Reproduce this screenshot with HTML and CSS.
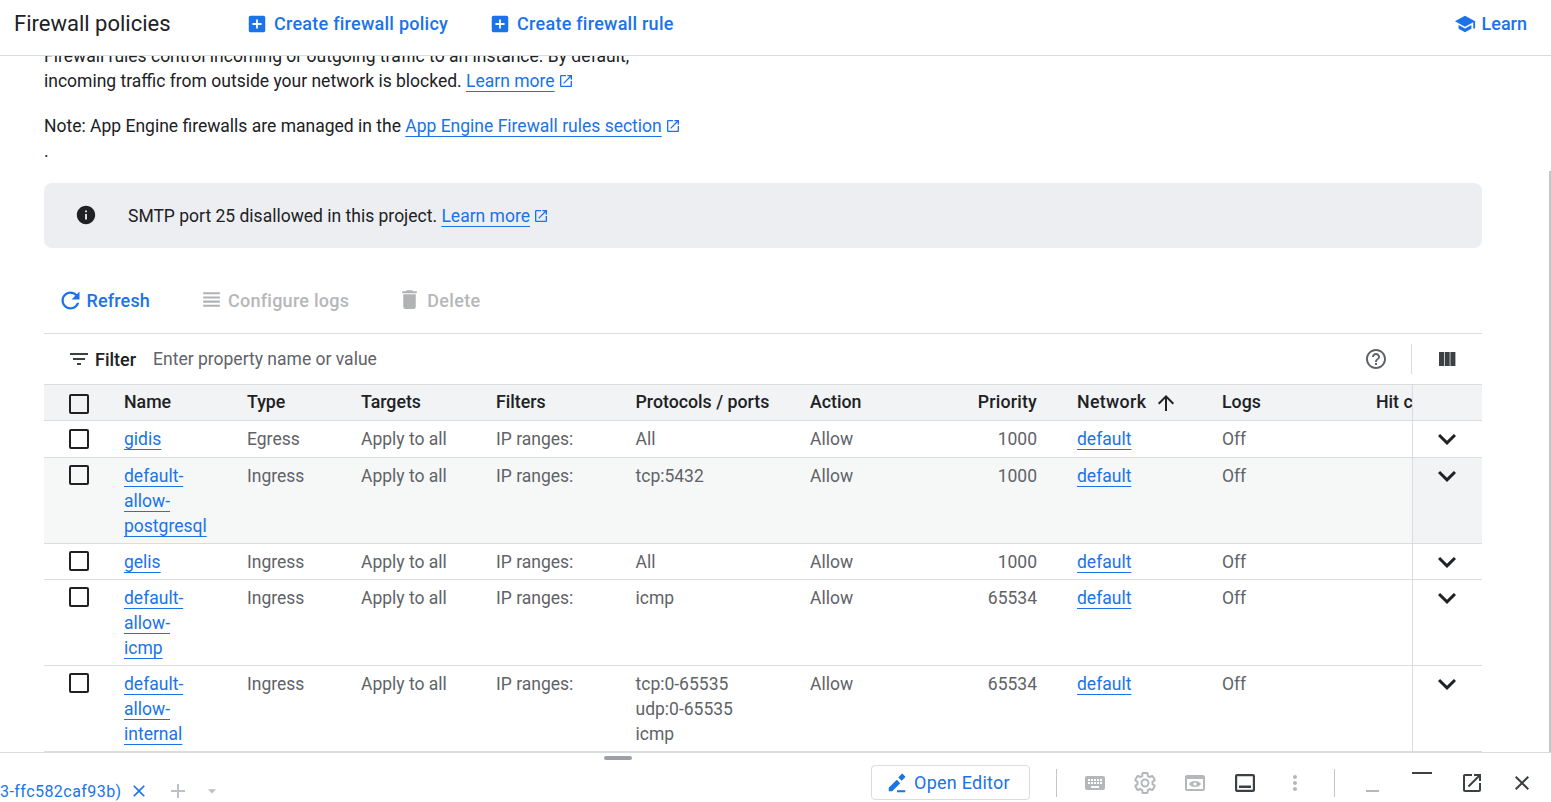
FILE: index.html
```html
<!DOCTYPE html>
<html lang="en">
<head>
    <meta charset="UTF-8">
    <title>Firewall policies</title>
    <link rel="stylesheet" href="styles.css">
</head>
<body>
    <header class="topbar">
        <h1 class="topbar-title">Firewall policies</h1>
        <a class="topbar-action first" href="#">
            <svg class="icon-22" viewBox="0 0 24 24"><path d="M19 3H5c-1.11 0-2 .9-2 2v14c0 1.1.89 2 2 2h14c1.1 0 2-.9 2-2V5c0-1.1-.9-2-2-2zm-2 10h-4v4h-2v-4H7v-2h4V7h2v4h4v2z"/></svg>
            Create firewall policy
        </a>
        <a class="topbar-action" href="#">
            <svg class="icon-22" viewBox="0 0 24 24"><path d="M19 3H5c-1.11 0-2 .9-2 2v14c0 1.1.89 2 2 2h14c1.1 0 2-.9 2-2V5c0-1.1-.9-2-2-2zm-2 10h-4v4h-2v-4H7v-2h4V7h2v4h4v2z"/></svg>
            Create firewall rule
        </a>
        <a class="topbar-learn" href="#">
            <svg class="icon-22" viewBox="0 0 24 24"><path d="M5 13.18v4L12 21l7-3.82v-4L12 17l-7-3.82zM12 3L1 9l11 6 9-4.91V17h2V9L12 3z"/></svg>
            Learn
        </a>
    </header>

    <main class="content">
        <div class="scroller">
            <p class="intro">Firewall rules control incoming or outgoing traffic to an instance. By default,<br>incoming traffic from outside your network is blocked. <a class="link" href="#">Learn more</a><svg class="ext" viewBox="0 0 24 24"><path d="M19 19H5V5h7V3H5c-1.11 0-2 .9-2 2v14c0 1.1.89 2 2 2h14c1.1 0 2-.9 2-2v-7h-2v7zM14 3v2h3.59l-9.83 9.83 1.41 1.41L19 6.41V10h2V3h-7z"/></svg></p>
            <p class="intro note">Note: App Engine firewalls are managed in the <a class="link" href="#">App Engine Firewall rules section</a><svg class="ext" viewBox="0 0 24 24"><path d="M19 19H5V5h7V3H5c-1.11 0-2 .9-2 2v14c0 1.1.89 2 2 2h14c1.1 0 2-.9 2-2v-7h-2v7zM14 3v2h3.59l-9.83 9.83 1.41 1.41L19 6.41V10h2V3h-7z"/></svg><br>.</p>

            <div class="banner">
                <svg class="banner-icon" viewBox="0 0 24 24"><path d="M12 2C6.48 2 2 6.48 2 12s4.48 10 10 10 10-4.48 10-10S17.52 2 12 2zm1 15h-2v-6h2v6zm0-8h-2V7h2v2z"/></svg>
                <span class="banner-text">SMTP port 25 disallowed in this project. <a class="link" href="#">Learn more</a><svg class="ext" viewBox="0 0 24 24"><path d="M19 19H5V5h7V3H5c-1.11 0-2 .9-2 2v14c0 1.1.89 2 2 2h14c1.1 0 2-.9 2-2v-7h-2v7zM14 3v2h3.59l-9.83 9.83 1.41 1.41L19 6.41V10h2V3h-7z"/></svg></span>
            </div>

            <div class="toolbar">
                <a class="tool tool-refresh" href="#">
                    <svg viewBox="0 0 24 24"><path d="M17.65 6.35C16.2 4.9 14.21 4 12 4c-4.42 0-7.99 3.58-7.99 8s3.57 8 7.99 8c3.73 0 6.84-2.55 7.73-6h-2.08c-.82 2.33-3.04 4-5.65 4-3.31 0-6-2.69-6-6s2.69-6 6-6c1.66 0 3.14.69 4.22 1.78L13 11h7V4l-2.35 2.35z"/></svg>
                    Refresh
                </a>
                <span class="tool tool-logs">
                    <svg viewBox="0 0 24 24"><path d="M4 15h16v-2H4v2zm0 4h16v-2H4v2zm0-8h16V9H4v2zm0-6v2h16V5H4z"/></svg>
                    Configure logs
                </span>
                <span class="tool tool-delete">
                    <svg viewBox="0 0 24 24"><path d="M6 19c0 1.1.9 2 2 2h8c1.1 0 2-.9 2-2V7H6v12zM19 4h-3.5l-1-1h-5l-1 1H5v2h14V4z"/></svg>
                    Delete
                </span>
            </div>

            <div class="filterbar">
                <svg class="icon-24 filter-icon" viewBox="0 0 24 24"><path d="M10 18h4v-2h-4v2zM3 6v2h18V6H3zm3 7h12v-2H6v2z"/></svg>
                <span class="filter-label">Filter</span>
                <span class="filter-hint">Enter property name or value</span>
                <svg class="icon-24 help-icon" viewBox="0 0 24 24"><path d="M11 18h2v-2h-2v2zm1-16C6.48 2 2 6.48 2 12s4.48 10 10 10 10-4.48 10-10S17.52 2 12 2zm0 18c-4.41 0-8-3.59-8-8s3.59-8 8-8 8 3.59 8 8-3.59 8-8 8zm0-14c-2.21 0-4 1.79-4 4h2c0-1.1.9-2 2-2s2 .9 2 2c0 2-3 1.75-3 5h2c0-2.25 3-2.5 3-5 0-2.21-1.79-4-4-4z"/></svg>
                <span class="filter-sep"></span>
                <svg class="icon-24 cols-icon" viewBox="0 0 24 24"><path d="M4 5h5v14H4zM9.7 5h5v14h-5zM15.4 5h5v14h-5z"/></svg>
            </div>

            <table class="rules">
                <colgroup>
                    <col class="c-check"><col class="c-name"><col class="c-type"><col class="c-targets"><col class="c-filters"><col class="c-ports"><col class="c-action"><col class="c-priority"><col class="c-network"><col class="c-logs"><col class="c-hit"><col class="c-more">
                </colgroup>
                <thead>
                    <tr>
                        <th><span class="check"></span></th>
                        <th>Name</th>
                        <th>Type</th>
                        <th>Targets</th>
                        <th>Filters</th>
                        <th>Protocols / ports</th>
                        <th>Action</th>
                        <th class="num">Priority</th>
                        <th class="sorted">Network <svg class="sort" viewBox="0 0 24 24"><path d="M4 12l1.41 1.41L11 7.83V20h2V7.83l5.58 5.59L20 12l-8-8-8 8z"/></svg></th>
                        <th>Logs</th>
                        <th class="clip">Hit count</th>
                        <th class="more"></th>
                    </tr>
                </thead>
                <tbody>
                    <tr>
                        <td><span class="check"></span></td>
                        <td class="name"><a class="link" href="#">gidis</a></td>
                        <td>Egress</td>
                        <td>Apply to all</td>
                        <td>IP ranges:</td>
                        <td>All</td>
                        <td>Allow</td>
                        <td class="num">1000</td>
                        <td><a class="link" href="#">default</a></td>
                        <td>Off</td>
                        <td></td>
                        <td class="more"><svg class="chevron" viewBox="0 0 24 24"><path d="M16.59 8.59L12 13.17 7.41 8.59 6 10l6 6 6-6z"/></svg></td>
                    </tr>
                    <tr class="hovered">
                        <td><span class="check"></span></td>
                        <td class="name"><a class="link" href="#">default-allow-postgresql</a></td>
                        <td>Ingress</td>
                        <td>Apply to all</td>
                        <td>IP ranges:</td>
                        <td>tcp:5432</td>
                        <td>Allow</td>
                        <td class="num">1000</td>
                        <td><a class="link" href="#">default</a></td>
                        <td>Off</td>
                        <td></td>
                        <td class="more"><svg class="chevron" viewBox="0 0 24 24"><path d="M16.59 8.59L12 13.17 7.41 8.59 6 10l6 6 6-6z"/></svg></td>
                    </tr>
                    <tr>
                        <td><span class="check"></span></td>
                        <td class="name"><a class="link" href="#">gelis</a></td>
                        <td>Ingress</td>
                        <td>Apply to all</td>
                        <td>IP ranges:</td>
                        <td>All</td>
                        <td>Allow</td>
                        <td class="num">1000</td>
                        <td><a class="link" href="#">default</a></td>
                        <td>Off</td>
                        <td></td>
                        <td class="more"><svg class="chevron" viewBox="0 0 24 24"><path d="M16.59 8.59L12 13.17 7.41 8.59 6 10l6 6 6-6z"/></svg></td>
                    </tr>
                    <tr>
                        <td><span class="check"></span></td>
                        <td class="name"><a class="link" href="#">default-allow-icmp</a></td>
                        <td>Ingress</td>
                        <td>Apply to all</td>
                        <td>IP ranges:</td>
                        <td>icmp</td>
                        <td>Allow</td>
                        <td class="num">65534</td>
                        <td><a class="link" href="#">default</a></td>
                        <td>Off</td>
                        <td></td>
                        <td class="more"><svg class="chevron" viewBox="0 0 24 24"><path d="M16.59 8.59L12 13.17 7.41 8.59 6 10l6 6 6-6z"/></svg></td>
                    </tr>
                    <tr>
                        <td><span class="check"></span></td>
                        <td class="name"><a class="link" href="#">default-allow-internal</a></td>
                        <td>Ingress</td>
                        <td>Apply to all</td>
                        <td>IP ranges:</td>
                        <td>tcp:0-65535<br>udp:0-65535<br>icmp</td>
                        <td>Allow</td>
                        <td class="num">65534</td>
                        <td><a class="link" href="#">default</a></td>
                        <td>Off</td>
                        <td></td>
                        <td class="more"><svg class="chevron" viewBox="0 0 24 24"><path d="M16.59 8.59L12 13.17 7.41 8.59 6 10l6 6 6-6z"/></svg></td>
                    </tr>
                </tbody>
            </table>
        </div>
        <span class="scrollbar"></span>
    </main>

    <footer class="shell">
        <span class="shell-handle"></span>
        <div class="shell-tab">
            <span class="shell-tab-name">3-ffc582caf93b)</span>
            <svg class="shell-close" viewBox="0 0 24 24"><path d="M19 6.41L17.59 5 12 10.59 6.41 5 5 6.41 10.59 12 5 17.59 6.41 19 12 13.41 17.59 19 19 17.59 13.41 12z"/></svg>
            <svg class="shell-plus" viewBox="0 0 24 24"><path d="M19 13h-6v6h-2v-6H5v-2h6V5h2v6h6v2z"/></svg>
            <svg class="shell-drop" viewBox="0 0 24 24"><path d="M7 10l5 5 5-5z"/></svg>
        </div>
        <div class="shell-tools">
            <button class="open-editor">
                <svg class="icon-22" viewBox="0 0 24 24"><path d="M3 17.25V21h3.75L15.500 12.200l-3.750-3.750L3 17.250zM20.710 6.040c.39-.39.39-1.020 0-1.410l-2.340-2.340c-.39-.39-1.020-.39-1.410 0l-3.600 3.600 3.750 3.750 3.600-3.600zM12 20h9v2h-9z"/></svg>
                Open Editor
            </button>
            <span class="shell-sep"></span>
            <span class="shell-btn dim"><svg viewBox="0 0 24 24"><path d="M20 5H4c-1.1 0-1.99.9-1.99 2L2 17c0 1.1.9 2 2 2h16c1.1 0 2-.9 2-2V7c0-1.1-.9-2-2-2zm-9 3h2v2h-2V8zm0 3h2v2h-2v-2zM8 8h2v2H8V8zm0 3h2v2H8v-2zm-1 2H5v-2h2v2zm0-3H5V8h2v2zm9 7H8v-2h8v2zm0-4h-2v-2h2v2zm0-3h-2V8h2v2zm3 3h-2v-2h2v2zm0-3h-2V8h2v2z"/></svg></span>
            <span class="shell-btn dim"><svg class="gear" viewBox="0 0 24 24"><path d="M19.43 12.98c.04-.32.07-.64.07-.98s-.03-.66-.07-.98l2.11-1.65c.19-.15.24-.42.12-.64l-2-3.46c-.12-.22-.39-.3-.61-.22l-2.49 1c-.52-.4-1.08-.73-1.69-.98l-.38-2.65C14.46 2.18 14.25 2 14 2h-4c-.25 0-.46.18-.49.42l-.38 2.65c-.61.25-1.17.59-1.69.98l-2.49-1c-.23-.09-.49 0-.61.22l-2 3.46c-.13.22-.07.49.12.64l2.11 1.65c-.04.32-.07.65-.07.98s.03.66.07.98l-2.11 1.65c-.19.15-.24.42-.12.64l2 3.46c.12.22.39.3.61.22l2.49-1c.52.4 1.08.73 1.69.98l.38 2.65c.03.24.24.42.49.42h4c.25 0 .46-.18.49-.42l.38-2.65c.61-.25 1.17-.59 1.69-.98l2.49 1c.23.09.49 0 .61-.22l2-3.46c.12-.22.07-.49-.12-.64l-2.11-1.65zM12 15.5c-1.93 0-3.5-1.57-3.5-3.5s1.57-3.5 3.5-3.5 3.5 1.57 3.5 3.5-1.57 3.5-3.5 3.5z"/></svg></span>
            <span class="shell-btn dim"><svg viewBox="0 0 24 24"><path d="M20 4H4c-1.1 0-2 .9-2 2v12c0 1.1.9 2 2 2h16c1.1 0 2-.9 2-2V6c0-1.1-.9-2-2-2zm0 14H4V8h16v10z"/><path d="M12 10c-2.6 0-4.8 1.2-6 3 1.2 1.8 3.4 3 6 3s4.8-1.2 6-3c-1.2-1.8-3.4-3-6-3zm0 4.6c-.9 0-1.6-.7-1.6-1.6s.7-1.6 1.6-1.6 1.6.7 1.6 1.6-.7 1.6-1.6 1.6z"/></svg></span>
            <span class="shell-btn"><svg viewBox="0 0 24 24"><path d="M20 3H4c-1.1 0-2 .9-2 2v14c0 1.1.9 2 2 2h16c1.1 0 2-.9 2-2V5c0-1.1-.9-2-2-2zm-.2 15.8H4.200V5.200h15.600zM6 14.500h12V17H6z"/></svg></span>
            <span class="shell-btn dim"><svg viewBox="0 0 24 24"><path d="M12 8c1.1 0 2-.9 2-2s-.9-2-2-2-2 .9-2 2 .9 2 2 2zm0 2c-1.1 0-2 .9-2 2s.9 2 2 2 2-.9 2-2-.9-2-2-2zm0 6c-1.1 0-2 .9-2 2s.9 2 2 2 2-.9 2-2-.9-2-2-2z"/></svg></span>
            <span class="shell-sep sep-right"></span>
            <span class="shell-btn dim"><svg viewBox="0 0 24 24"><path d="M6 19h13v2H6z"/></svg></span>
            <span class="shell-btn"><svg viewBox="0 0 24 24"><path d="M2 1h20v2H2z"/></svg></span>
            <span class="shell-btn"><svg viewBox="0 0 24 24"><path d="M19 19H5V5h7V3H5c-1.11 0-2 .9-2 2v14c0 1.1.89 2 2 2h14c1.1 0 2-.9 2-2v-7h-2v7zM14 3v2h3.59l-9.83 9.83 1.41 1.41L19 6.41V10h2V3h-7z"/></svg></span>
            <span class="shell-btn"><svg viewBox="0 0 24 24"><path d="M19 6.41L17.59 5 12 10.59 6.41 5 5 6.41 10.59 12 5 17.59 6.41 19 12 13.41 17.59 19 19 17.59 13.41 12z"/></svg></span>
        </div>
    </footer>
</body>
</html>
```

FILE: styles.css
```css
* {
    box-sizing: border-box;
}

html, body {
    height: 100%;
}

body {
    margin: 0;
    display: flex;
    flex-direction: column;
    overflow: hidden;
    background: #fff;
    color: #202124;
    font-family: Roboto, "Liberation Sans", sans-serif;
    font-size: 17.5px;
    line-height: 25px;
}

svg {
    fill: currentColor;
    flex: none;
}

.icon-22 {
    width: 22px;
    height: 22px;
}

.icon-24 {
    width: 24px;
    height: 24px;
}

.link {
    color: #1a73e8;
    text-decoration: underline;
    text-underline-offset: 4px;
    text-decoration-thickness: 1px;
}

.ext {
    width: 16px;
    height: 16px;
    margin-left: 3px;
    color: #1a73e8;
    vertical-align: -2px;
}

/* top bar */
.topbar {
    flex: none;
    height: 56px;
    display: flex;
    align-items: center;
    padding: 0 24px 8px 14px;
    border-bottom: 1px solid #dadce0;
}

.topbar-title {
    margin: 0;
    width: 232px;
    font-size: 22px;
    font-weight: 400;
}

.topbar-action,
.topbar-learn {
    display: flex;
    align-items: center;
    gap: 6px;
    color: #1a73e8;
    font-size: 18px;
    font-weight: 500;
    letter-spacing: 0.25px;
    text-decoration: none;
}

.topbar-action {
    margin-right: 41px;
}

.topbar-learn {
    margin-left: auto;
    letter-spacing: 0;
}

/* scrolled page */
.content {
    flex: 1;
    min-height: 0;
    position: relative;
    overflow: hidden;
}

.scroller {
    margin-top: -12.5px;
    padding: 0 69px 0 44px;
}

.intro {
    margin: 0 0 20px;
}

.note {
    margin-bottom: 19px;
}

.banner {
    height: 65px;
    display: flex;
    align-items: center;
    padding-left: 31px;
    gap: 31px;
    border-radius: 8px;
    background: #edeef2;
}

.banner-icon {
    width: 22px;
    height: 22px;
}

.banner-text {
    padding-top: 2px;
}

.toolbar {
    height: 86px;
    padding: 21px 0 0 12.5px;
    display: flex;
    align-items: center;
    border-bottom: 1px solid #dadce0;
}

.tool {
    display: flex;
    align-items: center;
    font-size: 18px;
    font-weight: 500;
    letter-spacing: 0.25px;
    text-decoration: none;
}

.tool svg {
    width: 25px;
    height: 25px;
}

.tool-refresh {
    gap: 3px;
    color: #1a73e8;
    letter-spacing: 0.15px;
    margin-right: 49px;
}

.tool-refresh svg {
    width: 27px;
    height: 27px;
}

.tool-logs {
    gap: 4px;
    color: #b5b7b9;
    margin-right: 48px;
}

.tool-delete {
    gap: 5px;
    color: #b5b7b9;
    letter-spacing: 0.35px;
}

.tool-logs svg,
.tool-delete svg {
    color: #b0b2b4;
    margin-top: -3px;
}

.filterbar {
    height: 50px;
    display: flex;
    align-items: center;
    padding-left: 23px;
}

.filter-icon {
    color: #3c4043;
}

.filter-label {
    margin-left: 4px;
    padding-top: 1px;
    font-size: 18px;
    font-weight: 500;
}

.filter-hint {
    margin-left: 17px;
    padding-top: 2px;
    color: #5f6368;
}

.help-icon {
    margin-left: auto;
    color: #5f6368;
}

.filter-sep {
    width: 1px;
    height: 30px;
    margin: 0 23px;
    background: #dadce0;
}

.cols-icon {
    margin-right: 23px;
    color: #3c4043;
}

/* table */
.rules {
    width: 1438px;
    table-layout: fixed;
    border-collapse: collapse;
    color: #5f6368;
}

.c-check { width: 80px; }
.c-name { width: 123px; }
.c-type { width: 114px; }
.c-targets { width: 135px; }
.c-filters { width: 139.5px; }
.c-ports { width: 174.5px; }
.c-action { width: 150px; }
.c-priority { width: 117px; }
.c-network { width: 145px; }
.c-logs { width: 154px; }
.c-hit { width: 36.5px; }
.c-more { width: 69.5px; }

.rules th,
.rules td {
    padding: 6px 0 4px;
    text-align: left;
    vertical-align: top;
    border-top: 1px solid #dadce0;
    border-bottom: 1px solid #dadce0;
}

.rules th {
    padding: 5px 0;
    background: #f1f3f4;
    color: #202124;
    font-size: 17.75px;
    font-weight: 500;
    white-space: nowrap;
}

.rules th.num {
    letter-spacing: 0.2px;
}

.rules .sorted {
    letter-spacing: 0.35px;
}

.rules tbody tr:first-child td {
    padding-bottom: 5px;
}

.rules th:first-child,
.rules td:first-child {
    padding-left: 25px;
}

.rules .num {
    padding-right: 40px;
    text-align: right;
}

.rules .clip {
    overflow: hidden;
}

.rules .name {
    padding-right: 39px;
}

.rules .more {
    border-left: 1px solid #dadce0;
    padding-right: 2px;
    text-align: center;
}

.hovered td {
    background: #f6f8f8;
}

.hovered .more {
    background: #f1f3f4;
}

.check {
    display: block;
    width: 20px;
    height: 20px;
    margin-top: 1px;
    border: 2px solid #202124;
    border-radius: 2px;
}

.rules th .check {
    margin-top: 4px;
}

.rules tbody tr:first-child .check {
    margin-top: 2px;
}

.sort {
    width: 24px;
    height: 24px;
    margin-left: 3px;
    vertical-align: -7px;
}

.chevron {
    width: 36px;
    height: 36px;
    margin-top: -6px;
    margin-bottom: -5px;
    color: #202124;
    display: inline-block;
    vertical-align: top;
}

.scrollbar {
    position: absolute;
    right: 0;
    top: 115px;
    bottom: 0;
    width: 2px;
    background: #c4c6c8;
}

/* cloud shell strip */
.shell {
    flex: none;
    position: relative;
    height: 50px;
    display: flex;
    justify-content: space-between;
    border-top: 1px solid #dadce0;
}

.shell-handle {
    position: absolute;
    left: 604px;
    top: 3px;
    width: 28px;
    height: 4px;
    border-radius: 2px;
    background: #9aa0a6;
}

.shell-tab {
    display: flex;
    align-items: center;
    align-self: flex-end;
    height: 22px;
    font-size: 16px;
    letter-spacing: 0.45px;
    color: #1a73e8;
}

.shell-close {
    width: 20px;
    height: 20px;
    margin-left: 7px;
    color: #1a73e8;
}

.shell-plus {
    width: 24px;
    height: 24px;
    margin-left: 17px;
    color: #bdc1c6;
}

.shell-drop {
    width: 20px;
    height: 20px;
    margin-left: 12px;
    color: #bdc1c6;
}

.shell-tools {
    display: flex;
    align-items: center;
    height: 36px;
    margin-top: 12px;
    padding-right: 4px;
}

.open-editor {
    width: 159px;
    height: 35px;
    display: flex;
    align-items: center;
    gap: 6px;
    margin-top: -2px;
    padding: 0 0 0 14px;
    border: 1px solid #dadce0;
    border-radius: 4px;
    background: #fff;
    color: #1a73e8;
    font: 400 18px Roboto, sans-serif;
    letter-spacing: 0.25px;
}

.open-editor svg {
    margin-top: 2px;
}

.shell-sep {
    width: 1px;
    height: 28px;
    margin: 0 13px 0 26px;
    background: #c4c6c8;
}

.sep-right {
    margin: 0 12px 0 14px;
}

.shell-btn {
    width: 50px;
    display: flex;
    justify-content: center;
    color: #3c4043;
}

.shell-btn svg {
    width: 24px;
    height: 24px;
}

.shell-btn.dim {
    color: #b5b7b9;
}

.shell-btn .gear {
    fill: none;
    stroke: currentColor;
    stroke-width: 2;
}
```
